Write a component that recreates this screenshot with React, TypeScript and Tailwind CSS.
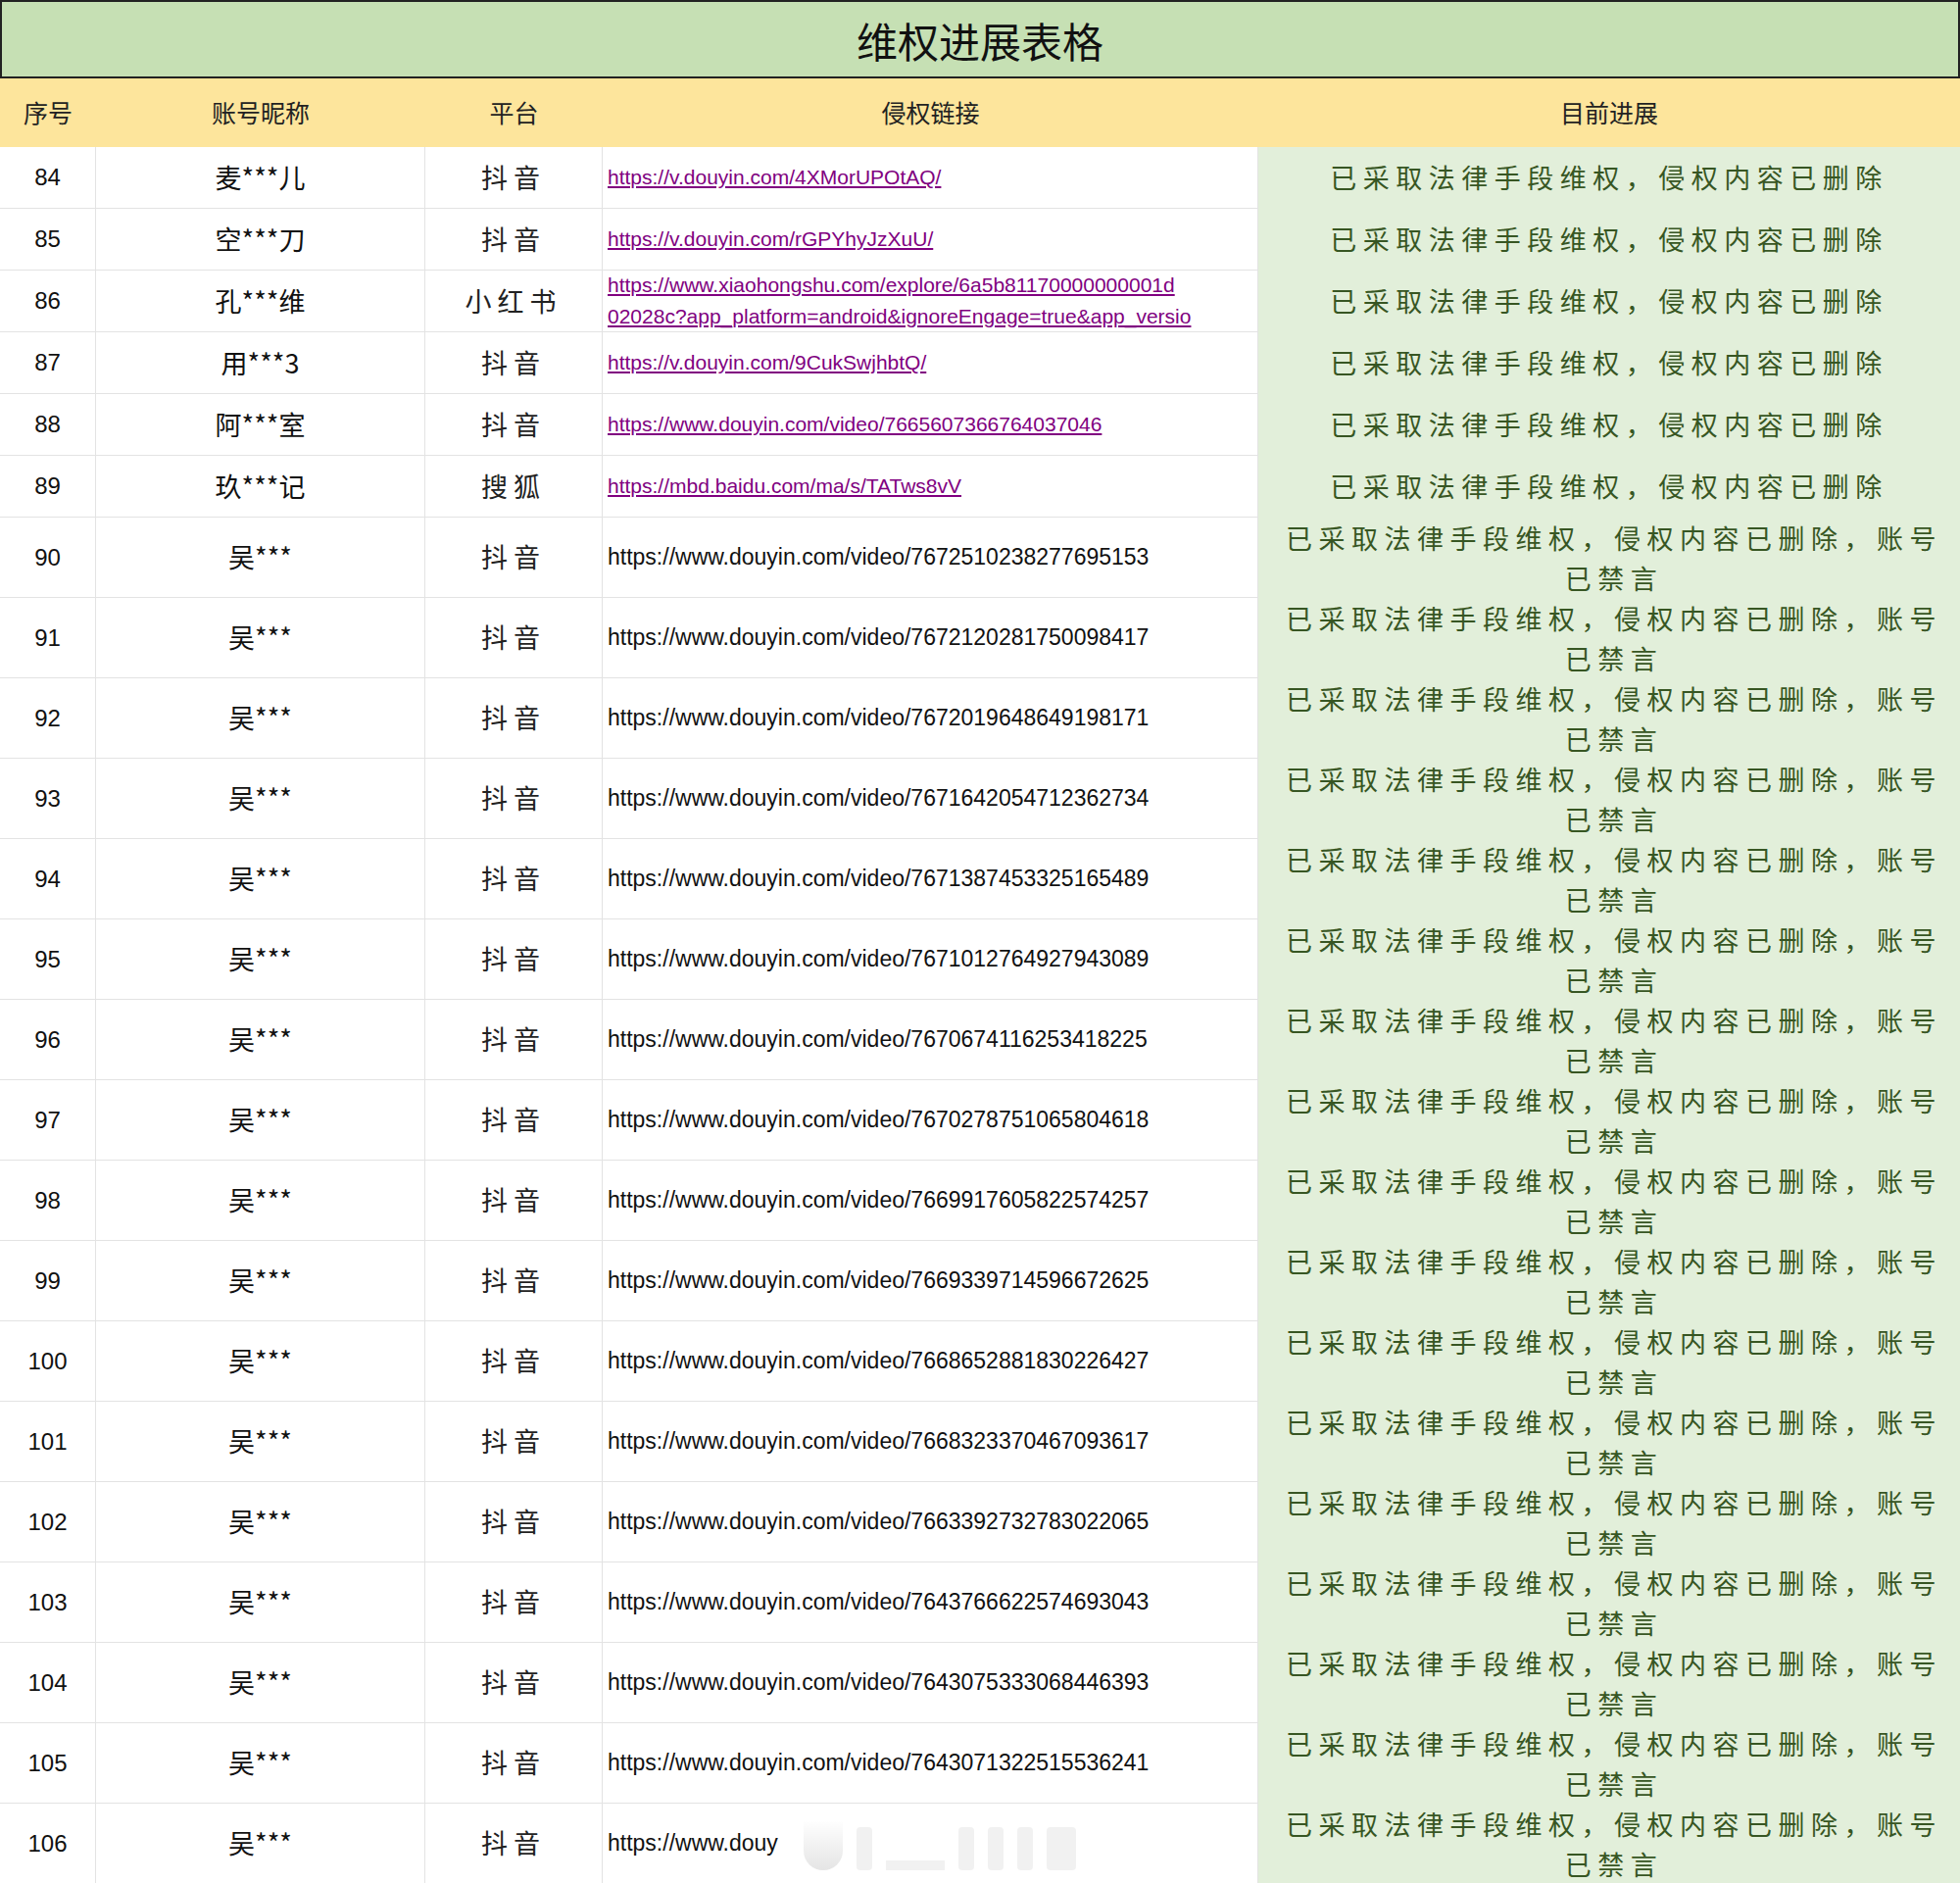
import React from "react";

const cjk = { fontFamily: '"Noto Sans CJK SC", "Noto Sans", sans-serif' };
const lat = { fontFamily: '"Liberation Sans", Arial, sans-serif' };

const top = [
  ["84", "麦***儿", "抖音", ["https://v.douyin.com/4XMorUPOtAQ/"]],
  ["85", "空***刀", "抖音", ["https://v.douyin.com/rGPYhyJzXuU/"]],
  ["86", "孔***维", "小红书", ["https://www.xiaohongshu.com/explore/6a5b81170000000001d", "02028c?app_platform=android&ignoreEngage=true&app_versio"]],
  ["87", "用***3", "抖音", ["https://v.douyin.com/9CukSwjhbtQ/"]],
  ["88", "阿***室", "抖音", ["https://www.douyin.com/video/7665607366764037046"]],
  ["89", "玖***记", "搜狐", ["https://mbd.baidu.com/ma/s/TATws8vV"]],
] as const;

const bottom = [
  ["90", "7672510238277695153"], ["91", "7672120281750098417"], ["92", "7672019648649198171"],
  ["93", "7671642054712362734"], ["94", "7671387453325165489"], ["95", "7671012764927943089"],
  ["96", "7670674116253418225"], ["97", "7670278751065804618"], ["98", "7669917605822574257"],
  ["99", "7669339714596672625"], ["100", "7668652881830226427"], ["101", "7668323370467093617"],
  ["102", "7663392732783022065"], ["103", "7643766622574693043"], ["104", "7643075333068446393"],
  ["105", "7643071322515536241"], ["106", ""],
];

const grid = "grid grid-cols-[98px_336px_181px_669px_716px]";
const cell = "border-r border-b border-[#e3e3e3] flex items-center justify-center";

export default function App() {
  return (
    <div className="w-[2000px] h-[1921px] bg-white overflow-hidden">
      <div className="h-[80px] bg-[#c6e0b4] border-2 border-[#222] flex items-center justify-center text-[42px] text-[#111]" style={cjk}>
        维权进展表格
      </div>
      <div className={`${grid} h-[70px] bg-[#fde59c] text-[25px] text-[#222]`} style={cjk}>
        <div className="flex items-center justify-center">序号</div>
        <div className="flex items-center justify-center">账号昵称</div>
        <div className="flex items-center justify-center">平台</div>
        <div className="flex items-center justify-center">侵权链接</div>
        <div className="flex items-center justify-center">目前进展</div>
      </div>
      {top.map(([n, name, p, links]) => (
        <div key={n} className={`${grid} h-[63px]`}>
          <div className={`${cell} text-[24px] text-[#111]`} style={lat}>{n}</div>
          <div className={`${cell} text-[27px] text-[#111]`} style={cjk}>{name}</div>
          <div className={`${cell} text-[27px] text-[#222] tracking-[6px]`} style={cjk}>{p}</div>
          <div className={`${cell} !justify-start flex-col !items-start pl-[5px] overflow-hidden`}>
            <div className="flex flex-col justify-center h-full">
              {links.map((l) => (
                <div key={l} className="whitespace-nowrap text-[21px] leading-[32px] text-[#800080] underline" style={lat}>{l}</div>
              ))}
            </div>
          </div>
          <div className="bg-[#e2efda] border-b border-[#e2efda] flex items-center justify-center text-[27px] tracking-[6.5px] text-[#375623]" style={cjk}>
            已采取法律手段维权，侵权内容已删除
          </div>
        </div>
      ))}
      {bottom.map(([n, id]) => (
        <div key={n} className={`${grid} h-[82px]`}>
          <div className={`${cell} text-[24px] text-[#111]`} style={lat}>{n}</div>
          <div className={`${cell} text-[27px] text-[#111]`} style={cjk}>吴***</div>
          <div className={`${cell} text-[27px] text-[#222] tracking-[6px]`} style={cjk}>抖音</div>
          <div className={`${cell} !justify-start pl-[5px] text-[23px] text-[#111] overflow-hidden relative`} style={lat}>
            {id ? `https://www.douyin.com/video/${id}` : "https://www.douy"}
            {!id && (
              <div className="absolute left-[205px] top-[10px] w-[350px] h-[58px] flex items-end gap-[14px] opacity-50">
                <div className="w-[40px] h-[50px] rounded-b-[20px] bg-gradient-to-b from-white to-[#ccc]" />
                <div className="w-[16px] h-[44px] bg-[#e5e5e5] rounded" />
                <div className="w-[60px] h-[10px] bg-[#e5e5e5]" />
                <div className="w-[16px] h-[44px] bg-[#e5e5e5] rounded" />
                <div className="w-[16px] h-[44px] bg-[#e5e5e5] rounded" />
                <div className="w-[16px] h-[44px] bg-[#e5e5e5] rounded" />
                <div className="w-[30px] h-[44px] bg-[#e5e5e5] rounded" />
              </div>
            )}
          </div>
          <div className="bg-[#e2efda] flex flex-col items-center justify-center text-[27px] leading-[41px] tracking-[6.5px] text-[#375623] pl-[10px]" style={cjk}>
            <div className="whitespace-nowrap">已采取法律手段维权，侵权内容已删除，账号</div>
            <div>已禁言</div>
          </div>
        </div>
      ))}
    </div>
  );
}
